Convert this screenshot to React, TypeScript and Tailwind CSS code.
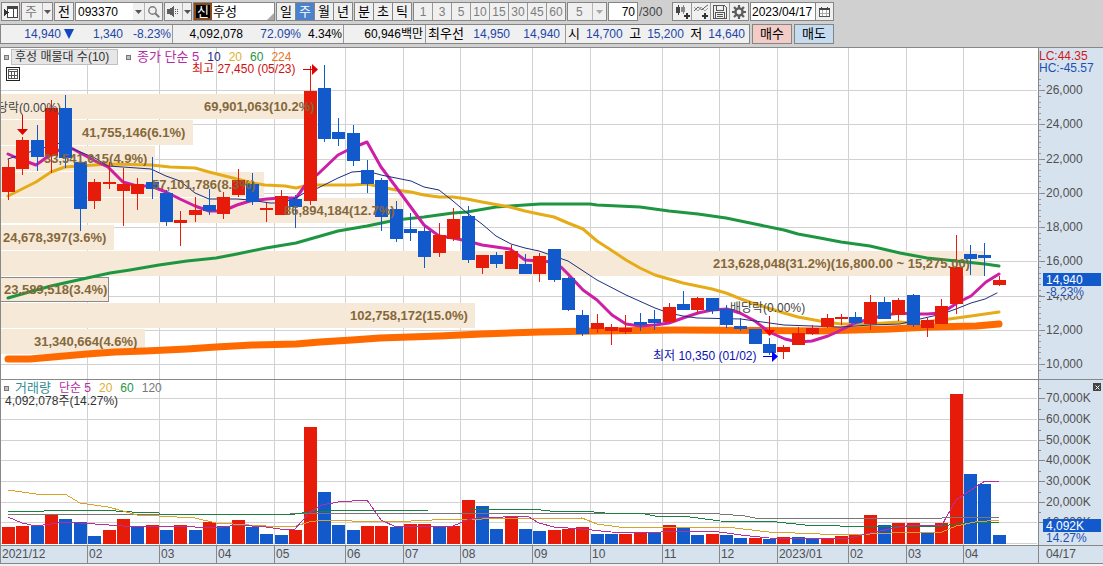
import type { ReactNode } from 'react';

type Candle = [high: number, top: number, bottom: number, low: number, color: 'r' | 'b'];
type Volume = [top: number, color: 'r' | 'b'];

const STEP = 14.36;
const FIRST = 8;
const VOLUME_BASE = 544;

const candles: Candle[] = [
    [159, 167, 192, 200, 'r'], [137, 140, 169, 175, 'r'], [125, 140, 157, 171, 'b'], [100, 108, 156, 173, 'r'], [95, 108, 158, 168, 'b'],
    [162, 162, 209, 231, 'b'], [179, 182, 201, 209, 'r'], [162, 182, 184, 189, 'r'], [168, 184, 191, 226, 'r'], [178, 184, 194, 210, 'r'],
    [157, 182, 189, 199, 'b'], [190, 193, 222, 226, 'b'], [211, 220, 223, 246, 'r'], [197, 210, 215, 222, 'r'], [189, 205, 211, 215, 'b'],
    [192, 197, 214, 219, 'r'], [169, 180, 195, 197, 'r'], [173, 184, 202, 205, 'b'], [203, 208, 210, 222, 'r'], [190, 196, 215, 215, 'r'],
    [195, 199, 207, 228, 'b'], [66, 91, 201, 205, 'r'], [65, 88, 139, 142, 'b'], [118, 132, 139, 146, 'b'], [125, 133, 161, 166, 'b'],
    [160, 170, 184, 193, 'b'], [178, 180, 217, 231, 'b'], [201, 209, 239, 242, 'b'], [213, 229, 233, 241, 'b'], [227, 231, 257, 268, 'b'],
    [223, 235, 253, 257, 'r'], [208, 219, 239, 241, 'r'], [206, 216, 260, 263, 'b'], [255, 255, 268, 274, 'r'], [252, 255, 264, 268, 'b'],
    [245, 251, 269, 269, 'r'], [254, 264, 274, 274, 'b'], [253, 256, 274, 282, 'r'], [249, 249, 280, 282, 'b'], [277, 278, 310, 311, 'b'],
    [310, 315, 334, 336, 'b'], [314, 323, 329, 333, 'r'], [324, 327, 331, 345, 'r'], [315, 328, 332, 334, 'r'], [313, 322, 325, 331, 'b'],
    [310, 319, 323, 330, 'b'], [303, 307, 322, 322, 'r'], [291, 304, 310, 310, 'b'], [297, 298, 310, 314, 'r'], [298, 298, 311, 314, 'b'],
    [305, 309, 325, 328, 'b'], [318, 326, 329, 331, 'b'], [329, 329, 344, 344, 'b'], [338, 344, 353, 355, 'b'], [345, 347, 352, 359, 'r'],
    [327, 333, 345, 345, 'r'], [325, 328, 334, 335, 'r'], [314, 318, 327, 328, 'r'], [314, 317, 319, 325, 'r'], [312, 317, 323, 324, 'b'],
    [295, 302, 324, 330, 'r'], [297, 302, 319, 319, 'b'], [298, 300, 315, 321, 'r'], [294, 295, 325, 327, 'b'], [318, 320, 328, 337, 'r'],
    [299, 306, 324, 324, 'r'], [235, 267, 304, 314, 'r'], [245, 254, 259, 275, 'b'], [243, 255, 258, 276, 'b'], [276, 280, 285, 286, 'r'],
];

const volumes: Volume[] = [
    [527, 'r'], [526, 'r'], [526, 'b'], [515, 'r'], [519, 'b'], [522, 'b'], [536, 'b'], [530, 'r'], [519, 'r'], [526, 'b'],
    [525, 'r'], [530, 'b'], [525, 'r'], [530, 'b'], [522, 'r'], [526, 'b'], [520, 'r'], [527, 'b'], [534, 'b'], [535, 'b'],
    [530, 'r'], [427, 'r'], [492, 'b'], [525, 'b'], [530, 'b'], [526, 'r'], [526, 'r'], [527, 'b'], [524, 'r'], [524, 'r'],
    [527, 'b'], [526, 'r'], [500, 'r'], [506, 'b'], [529, 'b'], [517, 'r'], [529, 'b'], [531, 'b'], [530, 'r'], [529, 'r'],
    [527, 'r'], [534, 'b'], [534, 'b'], [534, 'r'], [533, 'r'], [533, 'b'], [525, 'r'], [528, 'b'], [535, 'b'], [534, 'r'],
    [535, 'b'], [538, 'b'], [538, 'r'], [539, 'b'], [537, 'r'], [537, 'b'], [538, 'b'], [538, 'r'], [536, 'r'], [535, 'r'],
    [515, 'r'], [525, 'b'], [523, 'r'], [523, 'r'], [533, 'b'], [523, 'r'], [394, 'r'], [474, 'b'], [484, 'b'], [535, 'b'],
];

// volume-at-price bands, 10 buckets from top to bottom
const bands = [
    { width: 316, x: 204, text: '69,901,063(10.2%)' },
    { width: 192, x: 82, text: '41,755,146(6.1%)' },
    { width: 154, x: 44, text: '33,541,015(4.9%)' },
    { width: 263, x: 152, text: '57,101,786(8.3%)' },
    { width: 401, x: 284, text: '86,894,184(12.7%)' },
    { width: 113, x: 3, text: '24,678,397(3.6%)' },
    { width: 984, x: 713, text: '213,628,048(31.2%)(16,800.00 ~ 15,275.00)' },
    { width: 108, x: 4, text: '23,589,518(3.4%)' },
    { width: 474, x: 350, text: '102,758,172(15.0%)' },
    { width: 144, x: 34, text: '31,340,664(4.6%)' },
];

const priceLines = [
    { name: 'ma60', className: 'stroke-[#1e9641]', width: 3, points: '8,298 22,294 51,286 87,278 110,273 130,270 159,265 187,261 216,258 237,254 266,248 296,243 338,231 367,226 396,220 424,217 453,213 467,212 496,207 510,206 525,205 540,204 590,204 597,205 640,207 669,211 698,214 726,218 755,224 784,230 798,234 820,238 841,242 870,246 900,253 927,258 956,261 985,264 999,266' },
    { name: 'ma224', className: 'stroke-[#ff6a00]', width: 7, points: '8,359 30,359 87,354 115,352 145,351 187,349 216,347 252,345 296,344 320,342 352,340 380,338 439,336 482,334 540,332 597,331 676,330 820,331 890,329 930,327 976,326 999,324' },
    { name: 'ma20', className: 'stroke-[#e6ac18]', width: 3, points: '8,196 36,182 51,172 65,167 79,166 95,165 110,164 151,165 170,167 195,168 209,172 237,179 252,183 265,185 285,186 296,188 309,185 352,185 367,184 381,187 396,190 411,192 424,195 439,197 453,197 467,199 482,202 510,207 525,211 539,214 554,217 568,223 583,229 597,241 611,250 626,260 640,268 655,275 683,283 712,289 726,293 741,299 755,304 784,313 798,317 820,321 841,324 870,324 899,322 913,323 942,320 971,316 999,312' },
    { name: 'ma5', className: 'stroke-[#cc1fa6]', width: 3, points: '8,154 17,158 36,165 50,155 65,147 73,149 97,162 108,167 123,182 137,186 151,186 166,192 180,199 195,206 209,211 223,211 237,205 250,201 267,199 280,198 296,198 309,180 318,174 338,155 352,148 367,142 381,167 396,187 410,206 424,225 439,236 453,238 467,241 482,245 496,247 510,249 525,260 539,261 554,262 562,268 568,274 583,290 597,300 612,315 626,324 640,326 655,325 669,323 683,318 698,313 712,310 727,309 740,313 755,321 769,332 785,339 798,342 812,341 828,336 837,332 855,323 870,319 885,315 900,313 913,314 927,314 942,313 957,303 971,296 986,282 999,274' },
    { name: 'ma10', className: 'stroke-[#1c2f80]', width: 1, points: '8,159 20,155 36,150 50,146 60,143 73,149 95,158 108,166 123,167 151,169 166,176 180,181 195,193 209,199 237,199 250,200 270,203 281,203 296,198 309,190 318,188 338,178 352,172 367,171 381,175 396,178 411,181 424,187 439,190 453,201 467,213 482,224 496,236 511,244 525,248 539,251 568,261 597,280 626,295 655,308 669,313 683,316 697,318 741,319 755,321 784,325 812,326 840,327 870,325 900,324 920,319 942,314 956,309 971,303 985,299 997,293' },
];

const volumeLines = [
    { name: 'v120', className: 'stroke-[#777777]', points: '8,514 290,514 320,513 700,513 720,514 745,516 755,518 942,518 956,517 999,517' },
    { name: 'v60', className: 'stroke-[#1e8040]', points: '8,511 44,511 46,510 100,510 132,512 159,513 160,514 295,514 309,512 330,511 430,510 470,510 490,509 532,509 550,511 582,511 605,513 645,514 655,516 690,517 720,521 777,522 805,525 840,526 942,526 956,524 985,522 999,522' },
    { name: 'v20', className: 'stroke-[#d8a32a]', points: '8,490 36,494 65,494 80,503 108,507 123,511 137,515 159,516 195,518 216,523 266,526 296,526 309,522 324,520 352,521 411,521 453,519 482,519 582,518 597,524 619,527 726,527 769,532 820,534 870,534 913,532 942,532 956,526 975,522 999,520' },
    { name: 'v5', className: 'stroke-[#b5309b]', points: '8,517 22,523 36,526 51,524 65,522 79,523 95,524 123,526 151,527 180,526 195,527 223,527 237,525 266,527 280,529 295,529 309,513 322,505 338,502 367,500 381,520 396,527 424,526 453,526 467,520 482,517 496,518 511,516 527,516 539,523 554,527 582,529 611,532 654,533 669,531 712,531 741,535 769,538 812,539 850,538 870,533 899,527 913,525 942,525 956,500 971,490 985,481 999,482' },
];

// months with the share of the time axis that each one takes
const months = [
    { label: '2021/12', span: 87 }, { label: '02', span: 72 }, { label: '03', span: 57 }, { label: '04', span: 58 },
    { label: '05', span: 71 }, { label: '06', span: 58 }, { label: '07', span: 57 }, { label: '08', span: 72 },
    { label: '09', span: 58 }, { label: '10', span: 72 }, { label: '11', span: 57 }, { label: '12', span: 58 },
    { label: '2023/01', span: 71 }, { label: '02', span: 58 }, { label: '03', span: 57 }, { label: '04', span: 75 },
    { label: '04/17', span: 65 },
];
const totalSpan = months.reduce((sum, month) => sum + month.span, 0);

const gridX = [87, 159, 216, 274, 345, 403, 460, 532, 590, 662, 719, 777, 848, 906, 963];
const prices = [
    { y: 90, label: '26,000' }, { y: 124, label: '24,000' }, { y: 159, label: '22,000' }, { y: 193, label: '20,000' }, { y: 227, label: '18,000' },
    { y: 261, label: '16,000' }, { y: 296, label: '14,000' }, { y: 330, label: '12,000' }, { y: 364, label: '10,000' },
];
const volumeTicks = [
    { y: 398, label: '70,000K' }, { y: 419, label: '60,000K' }, { y: 440, label: '50,000K' }, { y: 460, label: '40,000K' },
    { y: 481, label: '30,000K' }, { y: 502, label: '20,000K' }, { y: 522, label: '10,000K' },
];
const minorTicks = Array.from({ length: 56 }, (_, i) => Math.round(56 + i * 5.7)).filter((y) => y > 76 && y < 378);

const fillOf = { r: 'fill-[#e61b09]', b: 'fill-[#125acb]' };
const centerOf = (i: number) => Math.round(FIRST + i * STEP);

const box = 'flex h-[19px] shrink-0 border border-[#858585] bg-[#f0f0f0]';

function Caret({ dim = false }: { dim?: boolean }) {
    return (
        <svg viewBox="0 0 7 4" className={`h-1 w-[7px] ${dim ? 'fill-[#a8a8a8]' : 'fill-[#555555]'}`}>
            <path d="M0 0h7L3.5 4z" />
        </svg>
    );
}

function Tool({ label, children, className = '' }: { label: string; children: ReactNode; className?: string }) {
    return (
        <button aria-label={label} className={`flex items-center justify-center ${className}`}>
            {children}
        </button>
    );
}

function Toolbar() {
    return (
        <div className="flex gap-px px-px pt-0.5 text-[13px] leading-4">
            <button aria-label="화면 메뉴" className={`${box} w-[19px] items-center justify-center`}>
                <svg viewBox="0 0 14 12" className="h-3 w-3.5" shapeRendering="crispEdges">
                    <path d="M3.5 .5h10v11h-10z" fill="white" stroke="#444" />
                    <path d="M3 1h11v2H3zM9 1h1v10H9z" fill="#444" />
                    <path d="M0 3l5 3.500L0 10z" fill="#333" />
                </svg>
            </button>
            <div className={`${box} w-8`}>
                <select aria-label="주기" className="w-5 appearance-none pl-[3px] text-[#777777]">
                    <option>주</option>
                </select>
                <span className="flex flex-1 items-center justify-center border-l border-[#b5b5b5]"><Caret /></span>
            </div>
            <button className={`${box} w-5 items-center justify-center`}>전</button>
            <div className={`${box} w-[88px]`}>
                <input aria-label="종목코드" defaultValue="093370" className="w-[57px] bg-white pl-0.5 text-[12px]" />
                <Tool label="종목 목록" className="w-[11px]"><Caret /></Tool>
                <Tool label="종목 검색" className="flex-1 border-l border-[#b5b5b5]">
                    <svg viewBox="0 0 12 12" className="size-3" fill="none" stroke="#7c7c7c">
                        <circle cx="4.500" cy="4.500" r="3.700" strokeWidth="1.400" />
                        <path d="M7.200 7.200l4 4" strokeWidth="2" />
                    </svg>
                </Tool>
            </div>
            <div className={`${box} w-7`}>
                <Tool label="음성" className="w-[17px]">
                    <svg viewBox="0 0 13 11" className="h-[11px] w-[13px]" fill="#5e5e5e" shapeRendering="crispEdges">
                        <path d="M0 3h2.500L7 0v11L2.500 8H0zM8 3h1v1H8zM8 5h1v1H8zM8 7h1v1H8zM10 3h1v1h-1zM10 5h1v1h-1zM10 7h1v1h-1z" />
                    </svg>
                </Tool>
                <Tool label="음성 설정" className="flex-1 border-l border-[#b5b5b5]"><Caret /></Tool>
            </div>
            <div className="relative flex h-[19px] w-[82px] shrink-0 border border-[#858585] bg-white">
                <span className="flex w-[18px] items-center justify-center border-2 border-[#8a4a1c] bg-black text-white">신</span>
                <input aria-label="종목명" defaultValue="후성" className="w-12 pl-px" />
                <svg viewBox="0 0 7 7" className="absolute right-0 bottom-0 size-[7px] fill-[#a8a8a8]"><path d="M7 0v7H0z" /></svg>
            </div>
            <div className={`${box} w-[77px] divide-x divide-[#858585]`}>
                {['일', '주', '월', '년'].map((unit) => (
                    <button key={unit} className={`flex-1 ${unit === '주' ? 'bg-[#4a82cc] text-white' : ''}`}>{unit}</button>
                ))}
            </div>
            <div className={`${box} w-[58px] divide-x divide-[#858585]`}>
                {['분', '초', '틱'].map((unit) => (
                    <button key={unit} className="flex-1">{unit}</button>
                ))}
            </div>
            <div className={`${box} w-[153px] divide-x divide-[#999999] text-[12px] text-[#7d7d7d]`}>
                {[1, 3, 5, 10, 15, 30, 45, 60].map((n) => (
                    <button key={n} className="w-0 flex-1">{n}</button>
                ))}
            </div>
            <div className={`${box} w-10 text-[12px] text-[#7d7d7d]`}>
                <select aria-label="분 간격" className="w-6 appearance-none pl-2">
                    <option>5</option>
                </select>
                <span className="flex flex-1 items-center justify-center border-l border-[#b5b5b5]"><Caret dim /></span>
            </div>
            <input id="count" defaultValue="70" className="h-[19px] w-[30px] shrink-0 border border-[#858585] bg-white pr-0.5 text-right text-[12px]" />
            <label htmlFor="count" className="w-8 shrink-0 pt-0.5 text-[12px] text-[#444444]">/300</label>
            <div className={`${box} w-[77px] divide-x divide-[#999999]`}>
                <Tool label="차트 유형" className="flex-1">
                    <svg viewBox="0 0 15 15" className="size-[15px]" shapeRendering="crispEdges">
                        <path d="M1 3h4v6H1zM3 1h1v10H3z" fill="#444" />
                        <path d="M6 3h4v5H6zM8 1h1v9H8z" fill="#888" />
                        <path d="M9 11h6v2H9zM11 9h2v6h-2z" fill="#333" />
                    </svg>
                </Tool>
                <Tool label="지표 추가" className="flex-1">
                    <svg viewBox="0 0 15 15" className="size-[15px]" fill="none">
                        <path d="M0 7l4-4 4 3 3-3 3-2" stroke="#666" />
                        <path d="M0 3l4 4 3-4 4 4 3-3" stroke="#a0a0a0" />
                        <path d="M8 12h6M11 9v6" stroke="#333" strokeWidth="2" />
                    </svg>
                </Tool>
                <Tool label="저장" className="flex-1">
                    <svg viewBox="0 0 14 14" className="size-3.5" fill="none" stroke="#555" shapeRendering="crispEdges">
                        <path d="M.5 .5h11l2 2v11H.5z" />
                        <path d="M3.5 1v4h7V1M2.500 13V7.500h9V13M4 9.500h6M4 11.500h6" />
                    </svg>
                </Tool>
                <Tool label="설정" className="flex-1">
                    <svg viewBox="0 0 14 14" className="size-3.5" fill="none" stroke="#5c5c5c">
                        <circle cx="7" cy="7" r="3.600" strokeWidth="2.400" />
                        <path d="M7 0v3M7 11v3M0 7h3M11 7h3M2 2l2.200 2.200M9.800 9.800L12 12M12 2L9.800 4.200M4.200 9.800L2 12" strokeWidth="2.200" />
                    </svg>
                </Tool>
            </div>
            <div className={`${box} w-[84px]`}>
                <input aria-label="기준일" defaultValue="2023/04/17" className="w-16 bg-white pl-px text-[12px]" />
                <Tool label="달력" className="flex-1 border-l border-[#858585]">
                    <svg viewBox="0 0 11 10" className="h-2.5 w-[11px]" shapeRendering="crispEdges">
                        <path d="M.5 1.500h10v8H.5z" fill="white" stroke="#555" />
                        <path d="M0 1h11v2H0zM2 0h1v1H2zM8 0h1v1H8z" fill="#444" />
                        <path d="M3.500 3v6M7.500 3v6M1 6.500h9" stroke="#aaa" />
                    </svg>
                </Tool>
            </div>
        </div>
    );
}

function QuoteBar() {
    return (
        <div className="mt-[3px] flex h-5 gap-0.5 text-[12px] leading-[18px]">
            <div className="flex w-[750px] shrink-0 divide-x divide-[#999999] border border-[#858585] bg-[#f0f0f0] whitespace-nowrap text-[#1c46a8]">
                <div className="flex w-[172px]">
                    <span className="w-[60px] text-right">14,940</span>
                    <span className="flex w-4 items-center justify-center">
                        <svg viewBox="0 0 10 10" className="size-2.5 fill-[#1247c0]"><path d="M0 0h10L5 10z" /></svg>
                    </span>
                    <span className="w-[46px] text-right">1,340</span>
                    <span className="flex-1 pr-px text-right">-8.23%</span>
                </div>
                <div className="flex w-[171px]">
                    <span className="w-[70px] text-right text-black">4,092,078</span>
                    <span className="w-[58px] text-right">72.09%</span>
                    <span className="flex-1 pr-px text-right text-black">4.34%</span>
                </div>
                <div className="w-[82px] pr-0.5 text-right text-black">60,946백만</div>
                <div className="flex w-[140px] pl-0.5">
                    <span className="w-[37px] text-[13px] text-black">최우선</span>
                    <span className="w-[45px] text-right">14,950</span>
                    <span className="w-[50px] text-right">14,940</span>
                </div>
                <div className="flex flex-1 justify-between pr-1 pl-0.5">
                    {[['시', '14,700'], ['고', '15,200'], ['저', '14,640']].map(([name, value]) => (
                        <span key={name} className="flex gap-1.5"><b className="text-[13px] font-normal text-black">{name}</b>{value}</span>
                    ))}
                </div>
            </div>
            <button className="w-10 shrink-0 border border-[#858585] bg-[#f3ccc8] text-[13px]">매수</button>
            <button className="w-10 shrink-0 border border-[#858585] bg-[#c5dcf0] text-[13px]">매도</button>
        </div>
    );
}

function PricePane() {
    return (
        <section className="relative">
            <svg viewBox="0 48 1103 331" className="block w-full text-[12px]">
                <rect x="0" y="48" width="1039" height="331" className="fill-white" />
                <rect x="1039" y="48" width="64" height="331" className="fill-[#d7e2ef]" />
                <g shapeRendering="crispEdges">
                    {gridX.map((x) => <rect key={x} x={x} y="48" width="1" height="331" className="fill-[#d2d2d2]" />)}
                    {prices.map(({ y }) => <rect key={y} x="1" y={y} width="1036" height="1" className="fill-[#d2d2d2]" />)}
                    {bands.map((band, i) => (
                        <rect key={band.text} x="1" y={94 + Math.round(i * 26.1)} width={band.width} height="25" className="fill-[#f6e9d8]" />
                    ))}
                    <rect x="0.5" y="277.5" width="108" height="24" className="fill-none stroke-[#8a8a8a]" />
                    {prices.map(({ y }) => <rect key={y} x="1039" y={y} width="6" height="1" className="fill-[#888888]" />)}
                    {minorTicks.map((y) => <rect key={y} x="1039" y={y} width="2" height="1" className="fill-[#999999]" />)}
                </g>
                {priceLines.map((line) => (
                    <polyline
                        key={line.name}
                        points={line.points}
                        fill="none"
                        strokeWidth={line.width}
                        strokeLinejoin="round"
                        strokeLinecap="round"
                        className={line.className}
                    />
                ))}
                <g shapeRendering="crispEdges">
                    {candles.map(([high, top, bottom, low, color], i) => (
                        <g key={i} className={fillOf[color]}>
                            <rect x={centerOf(i)} y={high} width="1" height={low - high} />
                            <rect x={centerOf(i) - 6} y={top} width="13" height={bottom - top} />
                        </g>
                    ))}
                </g>
                <g className="fill-[#85683a] text-[13px] font-bold">
                    {bands.map((band, i) => (
                        <text key={band.text} x={band.x} y={111 + Math.round(i * 26.1)}>{band.text}</text>
                    ))}
                </g>

                <text x="-3" y="112" className="fill-[#444444]">당락(0.00%)</text>
                <path d="M22.5 115v16" className="stroke-[#e00000]" />
                <path d="M17 129h11l-5.500 6z" className="fill-[#e00000]" />
                <text x="192" y="73" className="fill-[#d01010]">최고 27,450 (05/23)</text>
                <path d="M303 69.500h10" className="stroke-[#e00000]" />
                <path d="M312 64l6 5.500-6 5.500z" className="fill-[#e00000]" />
                <text x="730" y="312" className="fill-[#444444]">배당락(0.00%)</text>
                <path d="M769.5 316v16" className="stroke-[#e00000]" />
                <path d="M764 330h11l-5.500 6z" className="fill-[#ff0000]" />
                <text x="653" y="360" className="fill-[#0c10b0]">최저 10,350 (01/02)</text>
                <path d="M763 356.500h10" className="stroke-[#0000d8]" />
                <path d="M772 351l6 5.500-6 5.500z" className="fill-[#0000ff]" />

                <rect x="1038" y="48" width="1" height="331" className="fill-[#888888]" />
                <rect x="0" y="48" width="1" height="331" className="fill-[#888888]" />
                <text x="1039" y="60" className="fill-[#d01818]">LC:44.35</text>
                <text x="1039" y="72" className="fill-[#1c50b0]">HC:-45.57</text>
                <g className="fill-[#505050]">
                    {prices.map(({ y, label }) => <text key={y} x="1046" y={y + 4}>{label}</text>)}
                </g>
                <rect x="1043" y="286" width="58" height="10" className="fill-[#d7e2ef]" />
                <rect x="1043" y="273" width="58" height="13" className="fill-[#125acb]" />
                <text x="1046" y="284" className="fill-white">14,940</text>
                <text x="1046" y="296" className="fill-[#1c50b0]">-8.23%</text>
            </svg>
            <div className="absolute top-px left-1 flex items-center text-[12px] leading-3.5 whitespace-nowrap">
                <span className="size-[5px] border border-[#777777] bg-[#c0c0c0]" />
                <span className="ml-0.5 w-[107px] border border-[#c0c0c0] bg-[#e6e6e6] pl-[3px] text-[#333333]">후성 매물대 수(10)</span>
                <span className="ml-2 size-[5px] border border-[#777777] bg-[#c0c0c0]" />
                <span className="ml-1.5 flex gap-2">
                    <span className="text-[13px] text-[#b52ba5]">종가 단순 5</span>
                    <span className="text-[#1c2f80]">10</span>
                    <span className="text-[#dcb030]">20</span>
                    <span className="text-[#1e9641]">60</span>
                    <span className="text-[#e87424]">224</span>
                </span>
            </div>
            <button aria-label="데이터 표" className="absolute top-[19px] left-1.5 flex size-3.5 items-center justify-center border border-[#222222] bg-white">
                <svg viewBox="0 0 10 10" className="size-2.5" shapeRendering="crispEdges" fill="none" stroke="#555">
                    <path d="M.5 .5h9v9h-9zM.5 2.500h9M.5 6.500h9M3.500 2.500v7M6.500 2.500v7" />
                </svg>
            </button>
        </section>
    );
}

function VolumePane() {
    return (
        <section className="relative">
            <svg viewBox="0 379 1103 166" className="block w-full text-[12px]">
                <rect x="0" y="379" width="1039" height="166" className="fill-white" />
                <rect x="1039" y="379" width="64" height="166" className="fill-[#d7e2ef]" />
                <g shapeRendering="crispEdges">
                    {gridX.map((x) => <rect key={x} x={x} y="379" width="1" height="166" className="fill-[#d2d2d2]" />)}
                    {volumeTicks.map(({ y }) => <rect key={y} x="1" y={y} width="1036" height="1" className="fill-[#d2d2d2]" />)}
                    <rect x="1" y="543" width="1036" height="1" className="fill-[#d2d2d2]" />
                    {volumeTicks.map(({ y }) => (
                        <g key={y} className="fill-[#888888]">
                            <rect x="1039" y={y} width="6" height="1" />
                            <rect x="1039" y={y - 10} width="2" height="1" />
                        </g>
                    ))}
                    {volumes.map(([top, color], i) => (
                        <rect key={i} x={centerOf(i) - 6} y={top} width="13" height={VOLUME_BASE - top} className={fillOf[color]} />
                    ))}
                    {volumeLines.map((line) => (
                        <polyline key={line.name} points={line.points} fill="none" className={line.className} />
                    ))}
                    <rect x="0" y="379" width="1103" height="1" className="fill-[#888888]" />
                    <rect x="1038" y="379" width="1" height="166" className="fill-[#888888]" />
                    <rect x="0" y="379" width="1" height="166" className="fill-[#888888]" />
                </g>
                <g className="fill-[#505050]">
                    {volumeTicks.map(({ y, label }) => <text key={y} x="1046" y={y + 4}>{label}</text>)}
                </g>
                <rect x="1043" y="519" width="58" height="13" className="fill-[#125acb]" />
                <text x="1046" y="530" className="fill-white">4,092K</text>
                <text x="1046" y="542" className="fill-[#1c50b0]">14.27%</text>
            </svg>
            <div className="absolute top-0.5 left-1 text-[12px] leading-3.5 whitespace-nowrap">
                <div className="flex items-center">
                    <span className="size-[5px] border border-[#777777] bg-[#c0c0c0]" />
                    <span className="ml-1.5 text-[13px] text-[#2f8f96]">거래량</span>
                    <span className="ml-2 flex gap-2">
                        <span className="text-[#b52ba5]">단순 5</span>
                        <span className="text-[#dcb030]">20</span>
                        <span className="text-[#1e9641]">60</span>
                        <span className="text-[#777777]">120</span>
                    </span>
                </div>
                <div className="pl-px leading-3 text-[#333333]">4,092,078주(14.27%)</div>
            </div>
            <button aria-label="닫기" className="absolute top-1 right-0.5 flex size-2 items-center justify-center bg-[#444444]">
                <svg viewBox="0 0 5 5" className="size-[5px]" stroke="white"><path d="M.5 .5l4 4M4.500 .5l-4 4" /></svg>
            </button>
        </section>
    );
}

export default function App() {
    return (
        <main className="min-h-screen overflow-hidden bg-[#f0f0f0] font-['Liberation_Sans','Noto_Sans_CJK_KR',sans-serif] text-black">
            <header className="h-12 border-b border-[#888888] bg-[#d0d0d0]">
                <Toolbar />
                <QuoteBar />
            </header>
            <PricePane />
            <VolumePane />
            <div className="flex h-[19px] border-y border-[#888888] bg-[#d7e2ef] text-[12px] leading-4 text-[#505050]">
                {months.map((month, i) => (
                    <span
                        key={i}
                        className={`shrink-0 border-l border-[#888888] ${i === months.length - 1 ? 'pl-[7px]' : 'pl-px'}`}
                        style={{ width: `${(month.span / totalSpan) * 100}%` }}
                    >
                        {month.label}
                    </span>
                ))}
            </div>
        </main>
    );
}
